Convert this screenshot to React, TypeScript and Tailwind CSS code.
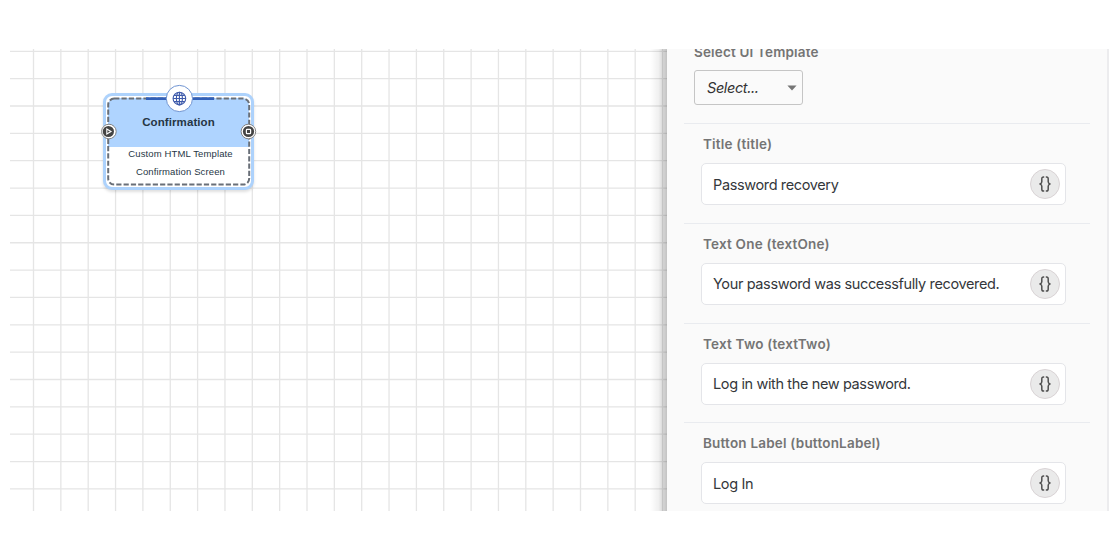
const STEP = 27.35;

const fields = [
  { label: "Title (title)", value: "Password recovery" },
  { label: "Text One (textOne)", value: "Your password was successfully recovered." },
  { label: "Text Two (textTwo)", value: "Log in with the new password." },
  { label: "Button Label (buttonLabel)", value: "Log In" },
];

function Grid() {
  const columns = Array.from({ length: 24 }, (_, i) => 23.5 + i * STEP);
  const rows = Array.from({ length: 17 }, (_, i) => 2.3 + i * STEP);
  return (
    <svg className="block" width="657" height="462" viewBox="0 0 657 462" stroke="#e5e5e5" strokeWidth="1.3">
      {columns.map((x) => (
        <line key={`c${x}`} x1={x} x2={x} y1="0" y2="462" />
      ))}
      {rows.map((y) => (
        <line key={`r${y}`} x1="0" x2="657" y1={y} y2={y} />
      ))}
    </svg>
  );
}

function GlobeBadge() {
  return (
    <svg className="absolute left-[59px] top-[-12px]" width="29" height="29" viewBox="0 0 29 29" fill="none">
      <circle cx="14.4" cy="14.5" r="13.1" fill="#fff" stroke="#6f94d2" strokeWidth="1" />
      <g stroke="#3f5bab" strokeWidth="1.15">
        <circle cx="14.4" cy="14.5" r="6.3" />
        <ellipse cx="14.4" cy="14.5" rx="3" ry="6.3" />
        <path d="M14.4 8.2v12.6M8.1 14.5h12.6M9 11.4h10.8M9 17.6h10.8" />
      </g>
    </svg>
  );
}

function Node() {
  return (
    <div className="absolute left-[93px] top-[44px] h-[97px] w-[151px] rounded-[9px] border-[3px] border-[#add2fc] bg-white shadow-[0_2px_3px_rgba(0,0,0,0.13)]">
      <div className="mx-[2px] mt-[2px] flex h-[87px] flex-col overflow-hidden rounded-[7px] text-center font-['Liberation_Sans',sans-serif] text-[#263645]">
        <div className="h-[49px] bg-[#afd4ff] pt-[16px] text-[11.5px] font-bold leading-[16px] tracking-[0.1px]">Confirmation</div>
        <div className="-mt-px pl-[4px] text-[9.5px] leading-[15px] tracking-[0.13px]">Custom HTML Template</div>
        <div className="mt-[3px] pl-[4px] text-[9.5px] leading-[15px] tracking-[0.13px]">Confirmation Screen</div>
      </div>
      <svg className="absolute left-[-3px] top-[-3px] overflow-visible" width="151" height="97" viewBox="0 0 151 97" fill="none">
        <rect x="5.2" y="5.6" width="141" height="86" rx="6" stroke="#696f78" strokeWidth="2" strokeDasharray="5.2 2.1" />
        <path d="M43 5.6h68" stroke="#3260b8" strokeWidth="2.8" />
        <g>
          <circle cx="5.9" cy="38.5" r="7.3" fill="#fff" stroke="#777" strokeWidth="0.9" />
          <circle cx="5.4" cy="38.5" r="5.6" fill="#444" />
          <path d="M3.8 36l4.2 2.5-4.2 2.5z" stroke="#fff" strokeWidth="1.1" />
        </g>
        <g>
          <circle cx="145.4" cy="38.5" r="7.3" fill="#fff" stroke="#777" strokeWidth="0.9" />
          <circle cx="145.5" cy="38.5" r="5.6" fill="#444" />
          <rect x="143.4" y="36.4" width="4.2" height="4.2" rx="0.7" stroke="#fff" strokeWidth="1.2" />
        </g>
      </svg>
      <GlobeBadge />
    </div>
  );
}

function BracesIcon() {
  return (
    <svg width="12" height="16" viewBox="0 0 12 16" fill="none" stroke="#505050" strokeWidth="1.5" strokeLinejoin="round">
      <path d="M5.2 0.9H4.5C3.4 0.9 2.8 1.6 2.8 2.7V5.7C2.8 6.9 2.2 7.6 1 8C2.2 8.4 2.8 9.1 2.8 10.3V13.3C2.8 14.4 3.4 15.1 4.5 15.1H5.2" />
      <path d="M6.8 0.9H7.5C8.6 0.9 9.2 1.6 9.2 2.7V5.7C9.2 6.9 9.8 7.6 11 8C9.8 8.4 9.2 9.1 9.2 10.3V13.3C9.2 14.4 8.6 15.1 7.5 15.1H6.8" />
    </svg>
  );
}

export default function App() {
  return (
    <main className="h-[560px] w-full overflow-hidden bg-white px-[10px] pt-[49px] font-[Inter,sans-serif]">
      <div className="flex h-[462px] w-[1100px] overflow-hidden">
        <section className="relative w-[657px] shrink-0 overflow-hidden bg-white">
          <Grid />
          <Node />
          <div className="absolute right-0 top-0 h-full w-[17px] bg-linear-to-r from-black/0 via-black/6 to-black/24" />
        </section>
        <aside className="w-[442px] shrink-0 overflow-hidden border-r-2 border-[#ececee] bg-[#fafafa] pl-[17px]">
          <div className="flex h-[74px] flex-col pl-[10px]">
            <div className="-mt-[7px] h-[20px] shrink-0 text-[13.5px] font-semibold leading-[20px] tracking-[0.16px] text-[#747474]">Select UI Template</div>
            <button className="mt-[8px] flex h-[35px] w-[109px] shrink-0 items-center justify-between rounded-[3px] border border-[#c5c5c5] pl-[12px] pr-[5px] text-[14.5px] italic tracking-[-0.4px] text-[#333]">
              <span className="pt-px">Select...</span>
              <svg width="10" height="6" viewBox="0 0 10 6" fill="#757575"><path d="M0.4 0.5h9.2L5 5.5z" /></svg>
            </button>
          </div>
          {fields.map((field) => (
            <div key={field.label} className="h-[99.75px] w-[406px] border-t border-[#e9ebef] pl-[17px] pt-[10px]">
              <label className="block h-[20px] pl-[2px] text-[13.5px] font-semibold leading-[20px] tracking-[0.2px] text-[#747474]">{field.label}</label>
              <div className="mt-[9px] flex h-[42px] w-[365px] items-center justify-between rounded-[5px] border border-[#e4e5e9] bg-white pl-[11px] pr-[5px]">
                <span className="pt-px text-[14.5px] tracking-[-0.37px] text-[#34373b]">{field.value}</span>
                <button className="flex size-[30px] items-center justify-center rounded-full border border-[#d9d3d5] bg-[#eaeaea]" aria-label="Insert variable">
                  <BracesIcon />
                </button>
              </div>
            </div>
          ))}
        </aside>
      </div>
    </main>
  );
}
